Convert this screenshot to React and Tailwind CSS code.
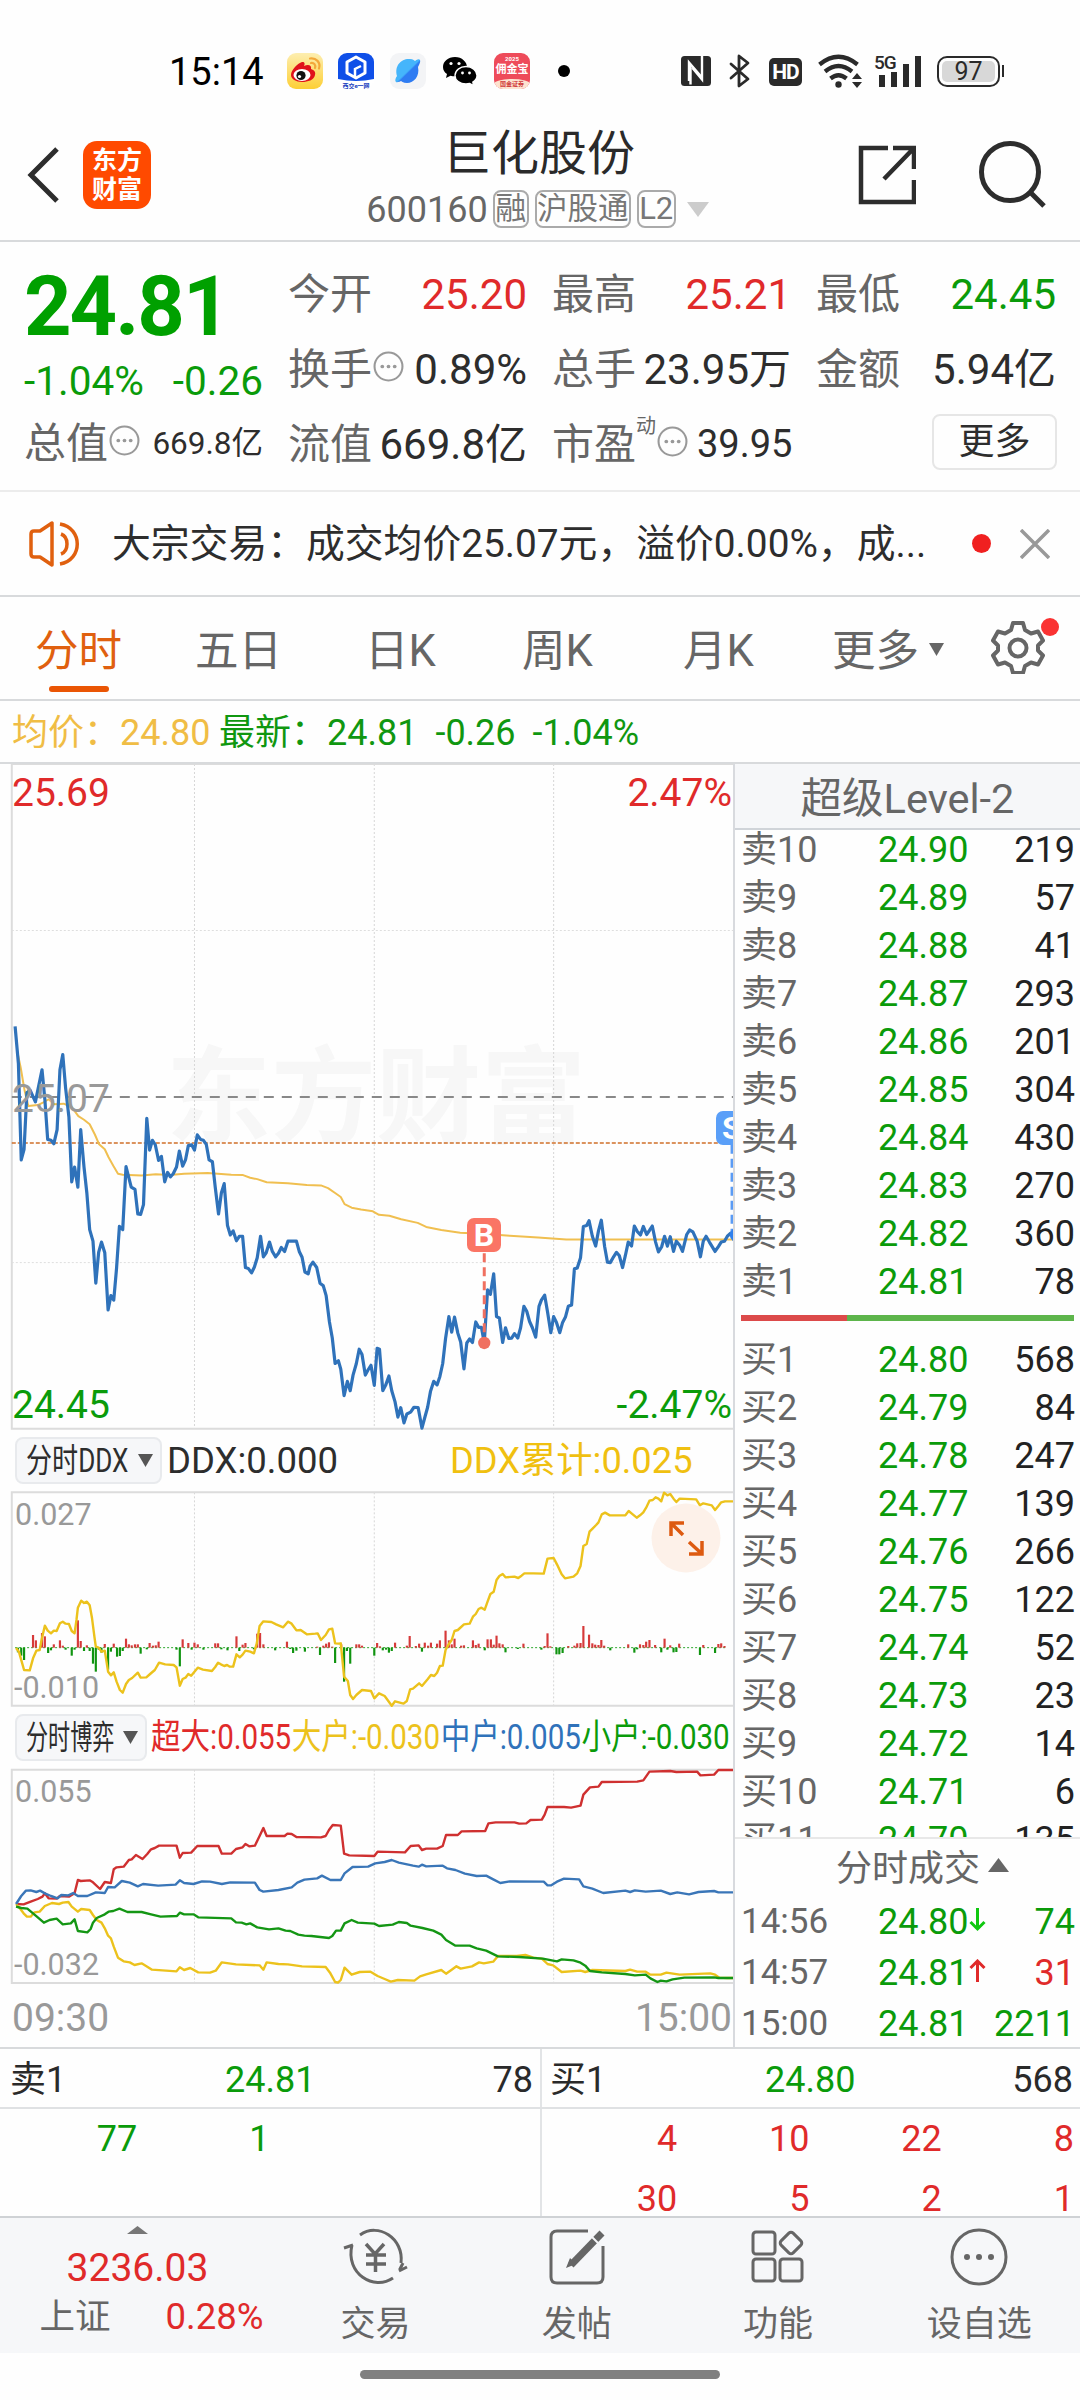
const sells = [
  ["卖10", "24.90", "219"],
  ["卖9", "24.89", "57"],
  ["卖8", "24.88", "41"],
  ["卖7", "24.87", "293"],
  ["卖6", "24.86", "201"],
  ["卖5", "24.85", "304"],
  ["卖4", "24.84", "430"],
  ["卖3", "24.83", "270"],
  ["卖2", "24.82", "360"],
  ["卖1", "24.81", "78"],
];

const buys = [
  ["买1", "24.80", "568"],
  ["买2", "24.79", "84"],
  ["买3", "24.78", "247"],
  ["买4", "24.77", "139"],
  ["买5", "24.76", "266"],
  ["买6", "24.75", "122"],
  ["买7", "24.74", "52"],
  ["买8", "24.73", "23"],
  ["买9", "24.72", "14"],
  ["买10", "24.71", "6"],
  ["买11", "24.70", "135"],
];

const trades = [
  { time: "14:56", price: "24.80", dir: "down", qty: "74", color: "text-[#0a9b0a]" },
  { time: "14:57", price: "24.81", dir: "up", qty: "31", color: "text-[#e02a2a]" },
  { time: "15:00", price: "24.81", dir: "", qty: "2211", color: "text-[#0a9b0a]" },
];

const PRICE =
  "32,597 39,680 45,896 51,872 57,745 64,740 75,766 89,694 95,760 101,850 108,852 114,860 121,828 127,694 133,660 139,735 146,800 152,945 158,912 165,957 171,828 178,912 184,970 190,1052 197,1078 203,1172 209,1103 215,1080 222,1104 229,1232 235,1200 241,1210 247,1138 253,1045 260,1052 267,911 278,957 286,962 292,1017 298,1018 304,996 311,803 317,874 323,852 329,862 336,897 342,888 349,945 355,924 361,934 367,927 374,912 380,876 387,910 393,896 399,864 406,862 412,874 418,840 425,850 431,852 437,861 443,896 450,900 456,957 463,1017 469,970 475,949 482,1043 488,1064 494,1055 501,1077 507,1067 514,1067 520,1137 526,1139 533,1149 539,1136 545,1115 552,1067 558,1113 564,1104 571,1080 577,1101 584,1113 590,1105 596,1092 603,1101 610,1078 628,1078 634,1101 640,1114 646,1147 653,1151 657,1134 663,1125 671,1137 678,1172 685,1178 691,1200 698,1259 704,1295 710,1352 717,1346 722,1365 729,1424 736,1392 742,1413 748,1378 755,1352 761,1320 767,1332 774,1378 780,1366 786,1356 793,1401 799,1318 804,1320 811,1413 817,1401 824,1380 830,1413 837,1438 843,1472 849,1451 856,1485 862,1465 870,1461 877,1450 886,1451 894,1497 900,1473 906,1450 912,1415 919,1392 926,1400 932,1381 938,1352 944,1296 951,1247 957,1282 963,1248 970,1284 976,1304 983,1364 989,1306 995,1297 1001,1305 1008,1259 1014,1271 1020,1271 1026,1306 1033,1187 1039,1197 1046,1151 1052,1247 1058,1250 1065,1305 1071,1272 1078,1296 1084,1295 1090,1285 1097,1295 1103,1272 1110,1224 1116,1235 1122,1258 1128,1272 1135,1293 1142,1224 1147,1210 1154,1199 1160,1236 1167,1283 1173,1247 1179,1260 1186,1283 1192,1260 1198,1248 1204,1224 1211,1221 1217,1140 1223,1138 1230,1115 1236,1045 1243,1043 1248,1032 1255,1067 1262,1089 1268,1055 1274,1031 1281,1090 1287,1125 1293,1126 1300,1113 1306,1103 1312,1110 1319,1137 1325,1110 1331,1080 1338,1089 1344,1044 1350,1056 1357,1064 1363,1045 1370,1063 1376,1054 1382,1044 1389,1080 1395,1102 1402,1090 1408,1067 1414,1089 1420,1068 1427,1101 1433,1078 1440,1087 1446,1101 1455,1063 1461,1053 1468,1057 1477,1078 1484,1113 1490,1078 1496,1067 1503,1080 1515,1101 1522,1090 1528,1080 1535,1078 1541,1067 1548,1060 1553,1062";

const AVG =
  "37,655 44,690 52,740 60,775 80,773 92,767 103,760 115,771 135,770 152,778 166,798 178,806 190,816 201,839 210,861 222,872 230,890 240,909 250,927 260,929 300,931 330,928 360,930 390,927 440,925 490,929 515,930 530,936 545,939 565,946 610,948 650,952 680,953 695,959 710,970 722,979 730,995 745,1003 765,1007 790,1011 803,1019 825,1021 850,1029 885,1037 903,1046 935,1053 975,1059 1030,1062 1080,1066 1140,1070 1200,1074 1400,1074 1553,1074";

const DDX_SUM =
  "34,684 40,695 46,725 51,750 63,751 70,715 77,692 84,690 88,660 95,617 101,632 108,640 114,632 120,633 127,610 133,605 139,611 146,612 152,633 158,640 162,600 165,563 172,542 178,549 184,545 190,556 195,595 200,650 203,680 209,683 215,695 222,692 229,755 235,766 241,757 247,785 254,810 260,818 267,792 273,780 280,774 292,758 298,773 310,772 318,762 328,750 337,728 350,733 368,735 374,742 381,797 387,777 393,773 399,762 405,767 412,755 419,743 430,749 449,753 456,741 462,728 468,733 475,738 481,735 487,740 494,740 501,703 508,712 514,704 520,692 530,695 538,700 544,670 550,618 558,604 575,606 585,613 600,622 610,605 617,610 628,631 637,630 650,643 668,641 673,640 680,660 690,645 697,628 704,626 710,670 717,671 722,670 729,770 737,783 742,825 748,837 755,825 767,810 786,813 793,835 803,820 815,828 830,857 837,844 855,851 862,843 869,808 875,806 888,790 894,798 906,778 913,765 920,768 926,758 932,738 938,737 944,690 951,672 957,660 963,633 970,630 983,613 995,611 1002,590 1008,582 1014,567 1020,563 1027,569 1033,545 1039,522 1046,515 1052,480 1058,468 1065,462 1071,472 1090,470 1098,474 1105,467 1111,460 1130,460 1152,461 1160,416 1173,414 1180,433 1190,463 1197,475 1215,470 1223,460 1230,438 1236,378 1243,372 1249,335 1256,325 1263,315 1268,307 1275,283 1282,278 1292,286 1325,286 1332,273 1338,280 1349,293 1356,286 1363,277 1369,263 1376,242 1383,240 1389,232 1395,236 1401,244 1407,218 1414,226 1420,222 1427,236 1433,246 1440,236 1475,238 1483,256 1490,250 1508,256 1515,270 1522,258 1528,247 1536,244 1553,244";

// [x, height]: positive is an inflow bar, negative an outflow bar
const DDX_BARS = [
  [38, -14], [45, -24], [51, -37], [70, 38], [76, 22], [89, 44], [95, 34], [102, -16], [108, -8], [114, 10],
  [127, 22], [133, 6], [139, -6], [152, -24], [158, -6], [165, 82], [171, 20], [178, -10], [184, 7], [190, -10],
  [197, -48], [203, -72], [209, -6], [215, -15], [222, 11], [229, -66], [235, -12], [241, 12], [248, -27], [254, -25],
  [260, -10], [267, 27], [273, 10], [279, 7], [286, 10], [292, 10], [298, -18], [311, -5], [317, 14], [324, 6], [330, 7],
  [336, 18], [374, -6], [381, -56], [387, 25], [399, 14], [406, -6], [412, 15], [419, 10], [431, -6], [456, 13], [462, 13],
  [469, -5], [482, -8], [501, 34], [507, -10], [514, 9], [520, 14], [538, -5], [545, 42], [551, 44], [558, 10],
  [583, -8], [608, 18], [615, -4], [621, -16], [628, -9], [646, -12], [672, 3], [678, -22], [685, 6], [691, 12],
  [697, 16], [704, 3], [710, -46], [723, 10], [729, -102], [735, -10], [742, -48], [755, 10], [761, 10], [767, 6], [793, -24],
  [799, 14], [805, 4], [811, -8], [818, -6], [824, -15], [830, -10], [837, 15], [862, 6], [868, 35], [881, 5],
  [888, 12], [894, -12], [900, 15], [907, 6], [913, 15], [926, 12], [932, 22], [944, 51], [951, 22], [957, 10],
  [963, 27], [977, 6], [983, 7], [1002, 22], [1008, 8], [1014, 12], [1027, -8], [1033, 25], [1040, 25], [1046, 9],
  [1052, 36], [1058, 13], [1065, 10], [1071, -14], [1097, -4], [1109, 12], [1147, -6], [1154, 5], [1160, 43], [1166, 4],
  [1179, -20], [1185, -20], [1192, -16], [1204, 5], [1217, 6], [1223, 13], [1230, 14], [1236, 65], [1248, 39],
  [1255, 13], [1261, 9], [1268, 8], [1274, 23], [1280, 6], [1293, -8], [1331, 10], [1344, -15], [1350, -5], [1356, 10],
  [1363, 8], [1369, 18], [1376, 23], [1388, 8], [1401, -14], [1408, 27], [1414, -6], [1420, 7], [1427, -14], [1433, -13],
  [1439, 12], [1483, -22], [1490, 8], [1515, -16], [1522, 11], [1528, 13], [1535, 5],
];

const SUPER =
  "34,612 50,613 65,605 80,597 90,590 95,580 103,595 120,596 127,588 146,590 158,580 165,540 171,543 190,541 197,547 212,567 222,546 235,549 241,508 247,502 262,500 273,480 279,478 288,465 302,477 312,462 320,448 328,444 337,437 374,437 381,473 387,459 405,458 418,438 463,438 470,461 490,461 500,447 514,442 520,432 528,439 540,437 550,408 558,384 565,408 603,408 609,401 618,402 628,411 680,412 690,408 697,390 705,375 722,377 729,461 740,466 793,468 800,455 858,457 870,438 887,436 894,450 903,446 926,446 938,438 945,405 970,405 978,394 1028,393 1035,370 1050,367 1090,367 1100,371 1115,370 1124,360 1148,359 1154,344 1160,321 1195,321 1210,323 1230,317 1236,284 1250,262 1268,260 1275,246 1350,245 1363,241 1376,215 1420,213 1433,216 1477,215 1484,226 1513,224 1522,210 1553,210";

const BIG =
  "34,612 42,625 50,640 57,650 65,650 73,637 84,635 95,618 110,609 125,612 133,608 145,606 152,620 165,635 172,627 190,630 197,645 205,660 215,668 222,685 229,707 235,715 241,740 250,773 262,784 275,787 285,795 300,790 312,800 322,809 374,814 381,802 390,810 403,804 420,817 445,818 457,812 470,787 500,793 550,796 558,809 565,787 590,792 610,793 640,799 690,801 700,820 710,846 716,848 722,840 730,803 745,824 762,816 785,815 800,828 815,837 828,845 843,840 878,842 890,829 903,823 935,810 945,821 957,809 967,799 976,806 1000,799 1015,787 1025,790 1045,785 1055,768 1095,768 1113,765 1130,773 1148,776 1160,792 1172,796 1190,816 1230,812 1240,816 1255,810 1325,813 1335,809 1350,815 1368,815 1378,824 1400,824 1412,818 1440,824 1505,820 1515,824 1524,833 1540,834 1553,834";

const MID =
  "34,612 45,588 55,572 65,571 77,576 85,572 95,580 108,588 122,595 130,585 145,586 155,579 165,588 185,588 203,577 222,579 229,561 243,562 258,543 275,548 292,559 303,552 335,557 372,554 381,541 390,549 410,552 428,544 445,545 470,552 488,547 540,548 550,570 558,575 590,570 618,562 630,548 645,539 672,535 682,527 700,540 722,540 730,520 747,501 780,500 795,490 815,486 830,480 845,488 875,497 887,500 894,494 903,499 938,497 947,505 965,510 985,521 1010,528 1030,527 1045,538 1060,549 1080,544 1152,545 1160,556 1168,556 1180,545 1195,536 1227,538 1236,559 1255,566 1278,579 1325,572 1335,576 1345,571 1368,575 1400,572 1420,582 1435,577 1460,583 1480,576 1513,573 1522,577 1553,577";

const SMALL =
  "34,620 45,624 58,626 70,640 80,652 93,668 105,660 120,656 133,673 150,670 158,658 165,693 185,697 192,687 197,668 205,654 222,643 230,635 240,633 253,626 270,636 300,636 320,643 340,650 375,648 381,638 390,643 410,643 420,652 490,655 500,667 512,668 522,673 530,670 545,682 570,688 590,685 605,692 615,693 632,704 645,707 660,708 697,714 704,708 712,692 722,692 730,670 745,660 758,668 793,671 803,678 832,674 845,666 862,669 870,677 895,684 918,692 935,704 945,720 965,737 995,737 1010,745 1030,752 1055,769 1100,771 1150,776 1180,784 1190,778 1215,781 1230,788 1240,797 1250,813 1275,817 1325,822 1345,826 1368,824 1378,835 1393,846 1400,842 1412,844 1425,838 1450,833 1513,832 1522,834 1553,834";

const vlines = [412, 793, 1173];

function Line({ points, color, width = 3.2 }) {
  return (
    <polyline
      points={points}
      fill="none"
      stroke={color}
      strokeWidth={width}
      strokeLinejoin="round"
      vectorEffect="non-scaling-stroke"
    />
  );
}

function Grid({ top, bottom }) {
  return (
    <g stroke="#d6d6d6" fill="none">
      {vlines.map((x) => (
        <path key={x} d={`M${x} ${top}V${bottom}`} strokeDasharray="2 2" vectorEffect="non-scaling-stroke" />
      ))}
      <path d={`M1553 ${top}H25V${bottom}H1553`} stroke="#dcdcdc" strokeWidth="2" vectorEffect="non-scaling-stroke" />
    </g>
  );
}

function Dots() {
  return (
    <svg viewBox="0 0 30 30" className="mb-[6px] ml-[1px] h-[31px] w-[31px] shrink-0" fill="#999">
      <circle cx="15" cy="15" r="13.5" fill="none" stroke="#999" strokeWidth="2" />
      <circle cx="9" cy="15" r="1.8" />
      <circle cx="15" cy="15" r="1.8" />
      <circle cx="21" cy="15" r="1.8" />
    </svg>
  );
}

function StatusBar() {
  return (
    <div className="flex h-[142px] items-center pl-[169px]">
      <span className="w-[118px] pt-[2px] text-[38px] leading-none text-black">15:14</span>
      <svg width="36" height="36" viewBox="0 0 36 36">
        <defs>
          <linearGradient id="wb" x1="0" y1="0" x2="0" y2="1">
            <stop offset="0" stopColor="#fdeeb0" />
            <stop offset="1" stopColor="#fdcf35" />
          </linearGradient>
        </defs>
        <rect width="36" height="36" rx="9" fill="url(#wb)" />
        <path d="M4 22c0-5 7-12 11-13 3-.5 3 2 2 4 4-2 8-1 7 3 3 1 5 3 4 6-1 5-7 7-13 7S4 26 4 22z" fill="#e0121b" />
        <ellipse cx="15" cy="22" rx="8.5" ry="6" fill="#fff" />
        <circle cx="14" cy="22.5" r="4.6" fill="#111" />
        <circle cx="12.5" cy="23.5" r="1.6" fill="#fff" />
        <path d="M24 10c3-.5 5 2 4 5M23 5.500c6-1 11 4 9 10" fill="none" stroke="#f3a83a" strokeWidth="2.200" strokeLinecap="round" />
      </svg>
      <div className="relative ml-[15px] h-9 w-9 overflow-hidden rounded-[9px] bg-white">
        <svg width="36" height="36" viewBox="0 0 36 36">
          <path d="M0 0h36v26Q18 30 0 26z" fill="#0f4fe8" />
          <path d="M18 4l9 5v11l-9 5-9-5V9z" fill="none" stroke="#fff" strokeWidth="3" strokeLinejoin="round" />
          <path d="M17 24v-8l6-3" fill="none" stroke="#fff" strokeWidth="2.500" />
        </svg>
        <span className="absolute inset-x-0 bottom-0 text-center text-[6px] leading-[7px] font-bold text-[#1a3fc0]">西交e一网</span>
      </div>
      <svg width="36" height="36" viewBox="0 0 36 36" className="ml-4">
        <defs>
          <linearGradient id="pl" x1="0" y1="0" x2="1" y2="1">
            <stop offset="0.5" stopColor="#45b5fb" />
            <stop offset="0.55" stopColor="#2f7cf2" />
          </linearGradient>
        </defs>
        <rect width="36" height="36" rx="9" fill="#f3f4f6" />
        <path d="M6 29C4 27 7 23 7 23 4 12 12 5 20 6c3 0 5 2 5 2s4-3 5-1-2 7-2 7c2 9-4 16-11 16-4 0-6-2-6-2s-4 2-5 1z" fill="url(#pl)" />
      </svg>
      <svg width="36" height="30" viewBox="0 0 36 30" className="ml-4">
        <path d="M13 1C6 1 1 5.500 1 11c0 3 1.500 5.500 4 7l-1 4 4.500-2.300c1.500.5 3 .6 4.500.6C20 20 25 16 25 11S20 1 13 1z" />
        <circle cx="9" cy="7.500" r="1.600" fill="#fff" />
        <circle cx="17" cy="7.500" r="1.600" fill="#fff" />
        <path d="M24 10.500c-6 0-11 4-11 9s5 8.500 11 8.500c1.300 0 2.500-.2 3.700-.5L31.500 29.500l-.7-3.500c2.500-1.500 4.200-4 4.200-6.500 0-5-5-9-11-9z" stroke="#fff" strokeWidth="1.300" />
        <circle cx="20.500" cy="17" r="1.400" fill="#fff" />
        <circle cx="27.500" cy="17" r="1.400" fill="#fff" />
      </svg>
      <div className="ml-[16px] flex h-9 w-9 flex-col items-center overflow-hidden rounded-[9px] bg-[#ee4b5a] font-bold whitespace-nowrap text-white">
        <span className="mt-[2px] text-[6px] leading-[7px]">2025</span>
        <span className="text-[11px] leading-[15px]">佣金宝</span>
        <span className="mt-[2px] w-full rounded-t-[50%] bg-[#fde3d0] text-center text-[6px] leading-[10px] text-[#d03a3a]">国金证券</span>
      </div>
      <div className="ml-7 h-3 w-3 rounded-full bg-black" />

      <svg width="30" height="30" viewBox="0 0 30 30" className="ml-[111px]">
        <rect width="30" height="30" rx="3.500" fill="#2a2a2a" />
        <path d="M8 25V6.500L20.500 21" fill="none" stroke="#fff" strokeWidth="2.400" />
        <path d="M9.500 8.500v20M21 0v23.500L11.500 12" fill="none" stroke="#fff" strokeWidth="2.400" />
      </svg>
      <svg width="22" height="34" viewBox="0 0 22 34" className="ml-[18px]" fill="none" stroke="#2a2a2a" strokeWidth="2.800" strokeLinejoin="round" strokeLinecap="round">
        <path d="M2 10l17 15-9 7V2l9 7L2 24" />
      </svg>
      <span className="mt-[2px] ml-[18px] h-[28px] w-[33px] rounded-[5px] bg-[#2a2a2a] text-center text-[21px] leading-[29px] font-bold tracking-[-1px] text-white">HD</span>
      <svg width="45" height="34" viewBox="0 0 45 34" className="ml-4" fill="none" stroke="#2a2a2a" strokeWidth="4.200">
        <path d="M1.500 10.500Q20.500-5 39.500 10.500M7 17.500q13.500-11 27 0M12.500 24.500q8-6.500 16 0" />
        <circle cx="20.500" cy="30.500" r="3.200" fill="#2a2a2a" stroke="none" />
        <path d="M34 25l5-6 5 6zM34 28l5 6 5-6z" fill="#2a2a2a" stroke="none" />
      </svg>
      <div className="relative ml-[12px] h-8 w-[48px]">
        <span className="absolute -top-[1px] -left-px text-[19px] leading-[18px] font-medium tracking-[-1px] text-[#2a2a2a]">5G</span>
        <svg width="48" height="32" viewBox="0 0 48 32" fill="#2a2a2a">
          <path d="M4 20h6v12H4zM16 17h6v15h-6zM28 9h6v23h-6zM40 1h6v31h-6z" />
        </svg>
      </div>
      <div className="ml-[14px] flex h-[31px] w-[63px] rounded-[10px] border-2 border-[#2a2a2a] p-[3px]">
        <span className="flex-1 rounded-[5px] bg-[#d8d8d8] text-center text-[25px] leading-[22px] text-[#2a2a2a]">97</span>
      </div>
      <div className="ml-[2px] h-3 w-[2px] bg-[#2a2a2a]" />
    </div>
  );
}

function Header() {
  return (
    <div className="flex h-[100px] justify-between border-b-2 border-[#d8dadc] pr-[33px] pl-[26px]">
      <div className="flex w-[320px] items-center pb-8">
        <svg width="34" height="56" viewBox="0 0 34 56" fill="none" stroke="#2d2d2d" strokeWidth="5">
          <path d="M31 2L5 28l26 26" />
        </svg>
        <div className="ml-[23px] flex h-[68px] w-[68px] flex-col justify-center rounded-[14px] bg-[#ff4a00] text-center text-[25px] leading-[29px] font-bold text-white">
          <span>东方</span>
          <span>财富</span>
        </div>
      </div>
      <div className="ml-[5px] flex flex-col items-center">
        <div className="-mt-[16px] mb-[2px] text-[48px] leading-[56px] text-[#2a2a2a]">巨化股份</div>
        <div className="mr-[3px] flex items-center text-[36px] leading-[48px] text-[#666]">
          <span className="mr-[5px] pt-[2px] text-[36px]">600160</span>
          <span className="mr-[6px] flex h-[38px] w-[36px] items-center justify-center rounded-[8px] border-2 border-[#aaa] text-[31px] text-[#777]">融</span>
          <span className="mr-[6px] flex h-[38px] w-[96px] items-center justify-center rounded-[8px] border-2 border-[#aaa] text-[30.5px] text-[#777]">沪股通</span>
          <span className="flex h-[38px] w-[39px] items-center justify-center rounded-[8px] border-2 border-[#aaa] text-[31px] text-[#777]">L2</span>
          <svg width="22" height="15" viewBox="0 0 22 15" className="ml-[11px]">
            <path d="M0 0h22L11 15z" fill="#ccc" />
          </svg>
        </div>
      </div>
      <div className="flex w-[320px] items-start justify-end gap-[63px]">
        <svg width="58" height="60" viewBox="0 0 58 60" fill="none" stroke="#2d2d2d" strokeWidth="4.500" className="mt-[3px]">
          <path d="M30 3H3v54h53V35M35 3h21v21M56 3L26 34" />
        </svg>
        <svg width="68" height="70" viewBox="0 0 68 70" fill="none" stroke="#2d2d2d" strokeWidth="5" className="-mt-[3px]">
          <circle cx="31" cy="33" r="28.500" />
          <path d="M51 53l14 14" />
        </svg>
      </div>
    </div>
  );
}

function Stat({ label, value, color = "text-[#2d2d2d]", icon }) {
  return (
    <div className="flex items-center justify-between">
      <span className="flex items-center text-[#666]">
        {label}
        {icon && <Dots />}
      </span>
      <span className={color}>{value}</span>
    </div>
  );
}

function Quote() {
  return (
    <div className="flex h-[250px] gap-[25px] border-b-2 border-[#ececec] pt-[15px] pr-[24px] pl-[24px] text-[42px] leading-[75px] whitespace-nowrap">
      <div className="w-[239px] shrink-0">
        <div className="h-[87px] text-[83px] leading-[100px] font-bold tracking-[-2px] text-[#00a000]">24.81</div>
        <div className="flex justify-between pt-[7px] text-[40.5px] leading-[60px] text-[#0a9b0a]">
          <span>-1.04%</span>
          <span>-0.26</span>
        </div>
        <div className="-mt-[5px] flex h-[75px] items-center">
          <span className="text-[#666]">总值</span>
          <Dots />
          <span className="ml-auto text-[31.5px] text-[#2d2d2d]">669.8亿</span>
        </div>
      </div>
      <div className="w-[239px] shrink-0">
        <Stat label="今开" value="25.20" color="text-[#e02a2a]" />
        <Stat label="换手" value="0.89%" icon />
        <Stat label="流值" value="669.8亿" />
      </div>
      <div className="w-[239px] shrink-0">
        <Stat label="最高" value="25.21" color="text-[#e02a2a]" />
        <Stat label="总手" value="23.95万" />
        <div className="flex items-center">
          <span className="text-[#666]">市盈</span>
          <span className="mb-[38px] text-[20px] leading-[20px] text-[#666]">动</span>
          <Dots />
          <span className="ml-[9px] text-[38px] text-[#2d2d2d]">39.95</span>
        </div>
      </div>
      <div className="flex-1">
        <Stat label="最低" value="24.45" color="text-[#0a9b0a]" />
        <Stat label="金额" value="5.94亿" />
        <div className="mt-[7px] -mr-px ml-auto h-[56px] w-[125px] rounded-[8px] border-2 border-[#e6e6e6] text-center text-[36px] leading-[52px] text-[#2d2d2d]">更多</div>
      </div>
    </div>
  );
}

function News() {
  return (
    <div className="flex h-[105px] items-center border-b-2 border-[#d8dadc] pl-[28px]">
      <svg width="54" height="46" viewBox="0 0 54 46" fill="none" stroke="#e0600f" strokeWidth="3.500" strokeLinejoin="round">
        <path d="M3 13q0-3 3-3h6l12-8v42l-12-8H6q-3 0-3-3z" />
        <path d="M33 13c8 3 8 17 0 20M32 3c23 4 23 36 0 40" />
      </svg>
      <span className="ml-[30px] w-[860px] pt-[2px] text-[38.8px] text-[#2d2d2d]">大宗交易：成交均价25.07元，溢价0.00%，成...</span>
      <span className="h-[19px] w-[19px] rounded-full bg-[#f02020]" />
      <svg width="30" height="30" viewBox="0 0 30 30" className="ml-[29px]" stroke="#999" strokeWidth="3.500">
        <path d="M1 1l28 28M29 1L1 29" />
      </svg>
    </div>
  );
}

function Tabs() {
  return (
    <div className="flex h-[104px] items-center border-b-2 border-[#d8dadc] pt-[8px] pl-[35px] text-[43.5px] leading-[60px] text-[#666]">
      <div className="relative w-[160px] text-[#e0600f]">
        分时
        <span className="absolute top-[64px] left-[14px] h-[6px] w-[60px] rounded-full bg-[#ea5504]" />
      </div>
      <span className="w-[170px]">五日</span>
      <span className="w-[157px]">日K</span>
      <span className="w-[161px]">周K</span>
      <span className="w-[149px]">月K</span>
      <span className="w-[97px]">更多</span>
      <svg width="15" height="13" viewBox="0 0 15 13" className="mb-[6px]">
        <path d="M0 0h15L7.500 13z" fill="#666" />
      </svg>
      <div className="relative mb-[10px] ml-[47px]">
        <svg width="54" height="54" viewBox="0 0 54 54" fill="none" stroke="#666" strokeWidth="4" strokeLinejoin="round">
          <path d="M22 3h10l2 7 6 3.500 7-2 5 9-5 5v5l5 5-5 9-7-2-6 3.500-2 7H22l-2-7-6-3.500-7 2-5-9 5-5v-5l-5-5 5-9 7 2 6-3.500z" />
          <circle cx="27" cy="28" r="8.500" />
        </svg>
        <span className="absolute -top-[2px] left-[50px] h-[18px] w-[18px] rounded-full bg-[#fa3232]" />
      </div>
    </div>
  );
}

function PriceChart() {
  return (
    <div className="relative h-[666px] text-[39px] leading-[44px]">
      <div className="absolute top-[273px] left-[166px] text-[105px] leading-[124px] font-bold text-[#f7f7f7]">东方财富</div>
      <svg viewBox="0 9 1553 1492" preserveAspectRatio="none" className="absolute inset-0 h-full w-full">
        <Grid top={9} bottom={1498} />
        <path d="M25 382H1553M25 1126H1553" stroke="#dedede" strokeDasharray="2 2" vectorEffect="non-scaling-stroke" />
        <path d="M25 755H1553" stroke="#888" strokeWidth="2" strokeDasharray="10 8" vectorEffect="non-scaling-stroke" />
        <path d="M25 858H1553" stroke="#d0702a" strokeWidth="1.500" strokeDasharray="4 2" vectorEffect="non-scaling-stroke" />
        <Line points={AVG} color="#f0bf50" width={2} />
        <Line points={PRICE} color="#2f72ba" />
        <path d="M1026 1105V1300" stroke="#f07060" strokeWidth="3" strokeDasharray="9 5" vectorEffect="non-scaling-stroke" />
        <ellipse cx="1026" cy="1306" rx="13" ry="14" fill="#f07060" />
        <path d="M1551 862V1060" stroke="#5a9bf5" strokeWidth="3" strokeDasharray="9 5" vectorEffect="non-scaling-stroke" />
        <path d="M1553 1050q-14 14 0 28z" fill="#2f80ed" />
      </svg>
      <span className="absolute top-[7px] left-[12px] text-[#e02a2a]">25.69</span>
      <span className="absolute top-[7px] right-[1px] text-[#e02a2a]">2.47%</span>
      <span className="absolute top-[313px] left-[12px] text-[#999]">25.07</span>
      <span className="absolute top-[619px] left-[12px] text-[#0a9b0a]">24.45</span>
      <span className="absolute top-[619px] right-[1px] text-[#0a9b0a]">-2.47%</span>
      <span className="absolute top-[454px] left-[467px] h-[34px] w-[34px] rounded-[7px] bg-[#fa7565] text-center text-[32px] leading-[35px] font-bold text-white">B</span>
      <div className="absolute top-[347px] right-0 h-[34px] w-[17px] overflow-hidden rounded-l-[7px] bg-[#5a9ff8]">
        <span className="block pl-[6px] text-[32px] leading-[35px] font-bold text-white">S</span>
      </div>
    </div>
  );
}

function Picker({ children }) {
  return (
    <span className="flex h-[47px] items-center rounded-[8px] border-2 border-[#e8eaed] bg-[#f6f7f9] pr-[7px] pl-[9px] text-[#2d2d2d]">
      {children}
      <svg width="15" height="13" viewBox="0 0 15 13" className="ml-[10px]">
        <path d="M0 0h15L7.500 13z" fill="#555" />
      </svg>
    </span>
  );
}

function Charts() {
  return (
    <div className="w-[733px] shrink-0">
      <PriceChart />
      <div className="flex h-[61px] items-center pl-[15px] whitespace-nowrap">
        <Picker>
          <span className="w-[102px]">
            <span className="block origin-left scale-x-[0.79] pt-px text-[33px]">分时DDX</span>
          </span>
        </Picker>
        <span className="ml-[5px] w-[283px] pt-[2px] text-[36.5px] text-[#2d2d2d]">DDX:0.000</span>
        <span className="pt-[2px] text-[36.3px] text-[#f0c010]">DDX累计:0.025</span>
      </div>
      <div className="relative h-[216px] text-[30.5px] leading-[36px] text-[#999]">
        <svg viewBox="0 213 1553 648" preserveAspectRatio="none" className="absolute inset-0 h-full w-full">
          <Grid top={217} bottom={857} />
          <path d="M32 683H1540" stroke="#2fa82f" strokeWidth="1" strokeDasharray="2 2" vectorEffect="non-scaling-stroke" />
          {DDX_BARS.map(([x, h]) => (
            <rect
              key={x}
              x={x - 2.3}
              y={h > 0 ? 683 - h : 683}
              width="4.6"
              height={Math.abs(h)}
              fill={h > 0 ? "#d63a3a" : "#109410"}
            />
          ))}
          <Line points={DDX_SUM} color="#ecc21c" width={2.4} />
        </svg>
        <span className="absolute top-[6px] left-[15px]">0.027</span>
        <span className="absolute top-[179px] left-[14px]">-0.010</span>
        <svg width="70" height="70" viewBox="0 0 70 70" className="absolute top-[12px] left-[651px]">
          <circle cx="35" cy="35" r="34.500" fill="#fdefe7" fillOpacity="0.9" />
          <path d="M20 33V20h13M21 21l11 11M51 38v13H38M50 50L38 39" fill="none" stroke="#dd5a10" strokeWidth="3.500" />
        </svg>
      </div>
      <div className="flex h-[61px] items-center pl-[15px] whitespace-nowrap">
        <Picker>
          <span className="w-[87px]">
            <span className="block origin-left scale-x-[0.67] pt-px text-[33px]">分时博弈</span>
          </span>
        </Picker>
        <div className="w-[580px] pt-[2px] pl-[4px]">
          <div className="flex w-[684px] origin-left scale-x-[0.846] justify-between text-[35px] tracking-[-0.1px]">
            <span className="text-[#e02a2a]">超大:0.055</span>
            <span className="text-[#ecc21c]">大户:-0.030</span>
            <span className="text-[#2f72ba]">中户:0.005</span>
            <span className="text-[#0a9b0a]">小户:-0.030</span>
          </div>
        </div>
      </div>
      <div className="relative h-[217px] text-[30.5px] leading-[36px] text-[#999]">
        <svg viewBox="0 204 1553 651" preserveAspectRatio="none" className="absolute inset-0 h-full w-full">
          <Grid top={209} bottom={849} />
          <Line points={SUPER} color="#cf3030" width={2.4} />
          <Line points={BIG} color="#ecc21c" width={2.4} />
          <Line points={MID} color="#3a76b8" width={2.4} />
          <Line points={SMALL} color="#149614" width={2.4} />
        </svg>
        <span className="absolute top-[6px] left-[15px]">0.055</span>
        <span className="absolute top-[179px] left-[14px]">-0.032</span>
      </div>
      <div className="flex h-[62px] items-center justify-between pt-[4px] pr-px pl-[12px] text-[39px] text-[#999]">
        <span>09:30</span>
        <span>15:00</span>
      </div>
    </div>
  );
}

function BookRow({ row }) {
  const [label, price, qty] = row;
  return (
    <div className="flex h-12 items-center pt-[2px] pr-[5px] pl-[6px]">
      <span className="w-[137px] text-[#666]">{label}</span>
      <span className="text-[#0a9b0a]">{price}</span>
      <span className="ml-auto text-[#222]">{qty}</span>
    </div>
  );
}

function OrderBook() {
  return (
    <div className="flex-1 border-l-2 border-[#d8dade] text-[36px]">
      <div className="h-[66px] border-b-2 border-[#d0d4d9] bg-[#f6f7f9] text-center text-[41.5px] leading-[69px] text-[#666]">超级Level-2</div>
      <div className="h-[1007px] overflow-hidden">
        <div className="-mt-[5px]">
          {sells.map((r) => (
            <BookRow key={r[0]} row={r} />
          ))}
        </div>
        <div className="mt-[10px] mr-[6px] mb-[14px] ml-[6px] flex h-[6px] bg-[#5db54b]">
          <div className="w-[106px] bg-[#dc4a4a]" />
        </div>
        {buys.map((r) => (
          <BookRow key={r[0]} row={r} />
        ))}
      </div>
      <div className="flex h-[57px] items-center justify-center border-t-2 border-[#e8e8e8] pt-[5px] pl-[30px] text-[36px] leading-[44px] text-[#666]">
        分时成交
        <svg width="21" height="14" viewBox="0 0 20 14" preserveAspectRatio="none" className="mb-[8px] ml-[8px]">
          <path d="M0 14h20L10 0z" fill="#666" />
        </svg>
      </div>
      {trades.map((t) => (
        <div key={t.time} className="flex h-[51px] items-center pt-[5px] pr-[5px] pl-[6px]">
          <span className="w-[137px] text-[35px] text-[#666]">{t.time}</span>
          <span className="w-[91px] text-[#0a9b0a]">{t.price}</span>
          {t.dir && (
            <svg
              width="17"
              height="24"
              viewBox="0 0 17 24"
              fill="none"
              stroke={t.dir === "up" ? "#e02a2a" : "#10c810"}
              strokeWidth="3"
              className="mb-1"
            >
              <path d={t.dir === "up" ? "M8.500 23V2M1.500 9l7-7 7 7" : "M8.500 0v21M1.500 14l7 7 7-7"} />
            </svg>
          )}
          <span className={`ml-auto ${t.color}`}>{t.qty}</span>
        </div>
      ))}
    </div>
  );
}

function QueueSide({ label, price, qty, items, color }) {
  return (
    <div className="w-[540px] overflow-hidden">
      <div className="flex h-[60px] items-center border-b-2 border-[#dfe1e3] pt-[3px] pr-[7px] pl-[10px]">
        <span className="w-[215px] text-[#2a2a2a]">{label}</span>
        <span className="text-[#0a9b0a]">{price}</span>
        <span className="ml-auto text-[#2a2a2a]">{qty}</span>
      </div>
      <div className={`grid w-[534px] grid-cols-4 pl-[5px] text-right leading-[60px] ${color}`}>
        {items.map((n, i) => (
          <span key={i}>{n}</span>
        ))}
      </div>
    </div>
  );
}

function NavItem({ label, children }) {
  return (
    <div className="flex flex-1 flex-col items-center pt-[8px] text-[35px] leading-[44px] text-[#666]">
      <svg width="68" height="62" viewBox="0 0 68 62" fill="none" stroke="#666" strokeWidth="3">
        {children}
      </svg>
      <span className="mt-[15px]">{label}</span>
    </div>
  );
}

function BottomNav() {
  return (
    <div className="flex h-[137px] border-t-2 border-[#cfd2d5] bg-[#f6f7f9]">
      <div className="flex w-[275px] flex-col items-center text-[#e02a2a]">
        <svg width="21" height="8" viewBox="0 0 21 8" className="mt-[8px]">
          <path d="M0 8h21L10.500 0z" fill="#777" />
        </svg>
        <span className="mt-[11px] text-[39px] leading-[46px]">3236.03</span>
        <div className="ml-[28px] flex w-[224px] items-center justify-between leading-[50px]">
          <span className="pt-px text-[35.5px] text-[#666]">上证</span>
          <span className="text-[36.5px]">0.28%</span>
        </div>
      </div>
      <NavItem label="交易">
        <path d="M18 9C36-4 62 12 59 37M57.500 44l3.500-7M57 45l8-4M51 52C32 65 3 48 10 19M2 22l9-3" />
        <path d="M24 18l9 10 9-10M24 29h20M24 38h20M33.500 28v18" strokeWidth="3.500" />
      </NavItem>
      <NavItem label="发帖">
        <path d="M45 5H14q-6 0-6 6v40q0 6 6 6h40q6 0 6-6V20" />
        <path d="M59 7L28 39" strokeWidth="7" stroke="#666" />
        <path d="M23 42l4-10 6 6z" fill="#666" stroke="none" />
        <path d="M49 11l6 6" stroke="#f6f7f9" strokeWidth="2" />
      </NavItem>
      <NavItem label="功能">
        <rect x="9" y="6" width="22" height="22" rx="3" />
        <rect x="9" y="33" width="22" height="22" rx="3" />
        <rect x="36" y="33" width="22" height="22" rx="3" />
        <rect x="38.500" y="8.500" width="17" height="17" rx="3" transform="rotate(45 47 17)" />
      </NavItem>
      <NavItem label="设自选">
        <circle cx="34" cy="31" r="27" />
        <g fill="#666" stroke="none">
          <circle cx="22" cy="31" r="3" />
          <circle cx="34" cy="31" r="3" />
          <circle cx="46" cy="31" r="3" />
        </g>
      </NavItem>
    </div>
  );
}

export default function App() {
  return (
    <div className="h-[2400px] w-[1080px] overflow-hidden bg-[#fefefe] font-[family-name:Roboto,'Noto_Sans_CJK_SC',sans-serif]">
      <StatusBar />
      <Header />
      <Quote />
      <News />
      <Tabs />
      <div className="flex h-[63px] items-center border-b-2 border-[#d8dadc] pt-[3px] pl-[12px] text-[36px] whitespace-pre">
        <span className="w-[207px] text-[#f0bd45]">均价：24.80</span>
        <span className="text-[#109710]">最新：24.81</span>
        <span className="ml-[18px] text-[#109710]">-0.26</span>
        <span className="ml-[17px] text-[#109710]">-1.04%</span>
      </div>
      <div className="flex h-[1283px]">
        <Charts />
        <OrderBook />
      </div>
      <div className="flex h-[169px] overflow-hidden border-t-2 border-[#d8dadc] text-[36px]">
        <QueueSide label="卖1" price="24.81" qty="78" items={["77", "1"]} color="text-[#0a9b0a]" />
        <div className="-mr-[2px] w-[2px] shrink-0 bg-[#e2e4e6]" />
        <QueueSide label="买1" price="24.80" qty="568" items={["4", "10", "22", "8", "30", "5", "2", "1"]} color="text-[#e02a2a]" />
      </div>
      <BottomNav />
      <div className="mx-auto mt-[17px] h-[9px] w-[360px] rounded-full bg-[#808080]" />
    </div>
  );
}
